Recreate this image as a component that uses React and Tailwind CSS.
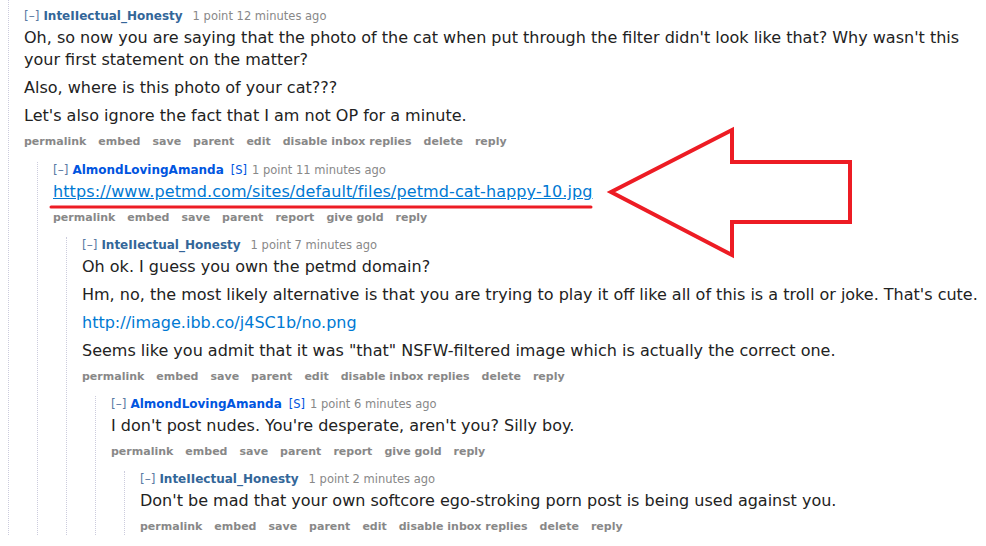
import React from 'react';

const FONT = { fontFamily: '"DejaVu Sans", Verdana, sans-serif' };

function Tagline({ author, op, time }) {
    return (
        <div className="flex items-baseline text-[11.5px] leading-4 whitespace-nowrap">
            <span className="text-[#5a7aa3] text-[12px] mr-[4px]">[–]</span>
            <span className={`font-bold text-[12px] ${op ? 'text-[#0055df]' : 'text-[#336699]'}`}>{author}</span>
            {op ? <span className="text-[#0055df] ml-[7px] mr-[5px]">[S]</span> : <span className="w-[10px]" />}
            <span className="text-[#888]">1 point {time}</span>
        </div>
    );
}

function Buttons({ items }) {
    return (
        <ul className="flex gap-[12px] text-[11px] leading-4 font-bold text-[#888] mt-[7px]">
            {items.map((b) => (
                <li key={b}>{b}</li>
            ))}
        </ul>
    );
}

const MINE = ['permalink', 'embed', 'save', 'parent', 'edit', 'disable inbox replies', 'delete', 'reply'];
const THEIRS = ['permalink', 'embed', 'save', 'parent', 'report', 'give gold', 'reply'];

function Comment({ author, op, time, buttons, children, replies, first, spacing = 'mt-[11px]' }) {
    return (
        <div className={`border-l border-dotted border-[#ccd] pl-[15px] ${first ? 'pt-2' : `ml-[13px] ${spacing}`}`}>
            <Tagline author={author} op={op} time={time} />
            <div className="mt-[3px] text-[16px] leading-[22px] text-[#222] flex flex-col gap-[6px]">
                {children}
            </div>
            <Buttons items={buttons} />
            {replies}
        </div>
    );
}

export default function App() {
    return (
        <div className="relative w-[986px] h-[546px] overflow-hidden bg-white pl-2" style={FONT}>
            <Comment first author="InteIIectual_Honesty" time="12 minutes ago" buttons={MINE}
                replies={
                    <Comment author="AlmondLovingAmanda" op time="11 minutes ago" buttons={THEIRS} spacing="mt-[12px]"
                        replies={
                            <Comment author="InteIIectual_Honesty" time="7 minutes ago" buttons={MINE}
                                replies={
                                    <Comment author="AlmondLovingAmanda" op time="6 minutes ago" buttons={THEIRS}
                                        replies={
                                            <Comment author="InteIIectual_Honesty" time="2 minutes ago" buttons={MINE}>
                                                <p>Don't be mad that your own softcore ego-stroking porn post is being used against you.</p>
                                            </Comment>
                                        }>
                                        <p>I don't post nudes. You're desperate, aren't you? Silly boy.</p>
                                    </Comment>
                                }>
                                <p>Oh ok. I guess you own the petmd domain?</p>
                                <p>Hm, no, the most likely alternative is that you are trying to play it off like all of this is a troll or joke. That's cute.</p>
                                <p><a className="text-[#0079d3]">http://image.ibb.co/j4SC1b/no.png</a></p>
                                <p>Seems like you admit that it was "that" NSFW-filtered image which is actually the correct one.</p>
                            </Comment>
                        }>
                        <p><a className="text-[#0079d3] underline tracking-[0.1px]">https://www.petmd.com/sites/default/files/petmd-cat-happy-10.jpg</a></p>
                    </Comment>
                }>
                <p>Oh, so now you are saying that the photo of the cat when put through the filter didn't look like that? Why wasn't this your first statement on the matter?</p>
                <p>Also, where is this photo of your cat???</p>
                <p>Let's also ignore the fact that I am not OP for a minute.</p>
            </Comment>

            {/* annotation overlay */}
            <svg className="absolute left-0 top-0 pointer-events-none" width="986" height="546">
                <line x1="51" y1="207" x2="591" y2="207" stroke="#ed1c24" strokeWidth="3" strokeLinecap="round" />
                <polygon
                    points="611,192 732,130 732,162 850,162 850,222 732,222 732,255"
                    fill="none"
                    stroke="#ed1c24"
                    strokeWidth="4"
                    strokeLinejoin="miter"
                />
            </svg>
        </div>
    );
}
